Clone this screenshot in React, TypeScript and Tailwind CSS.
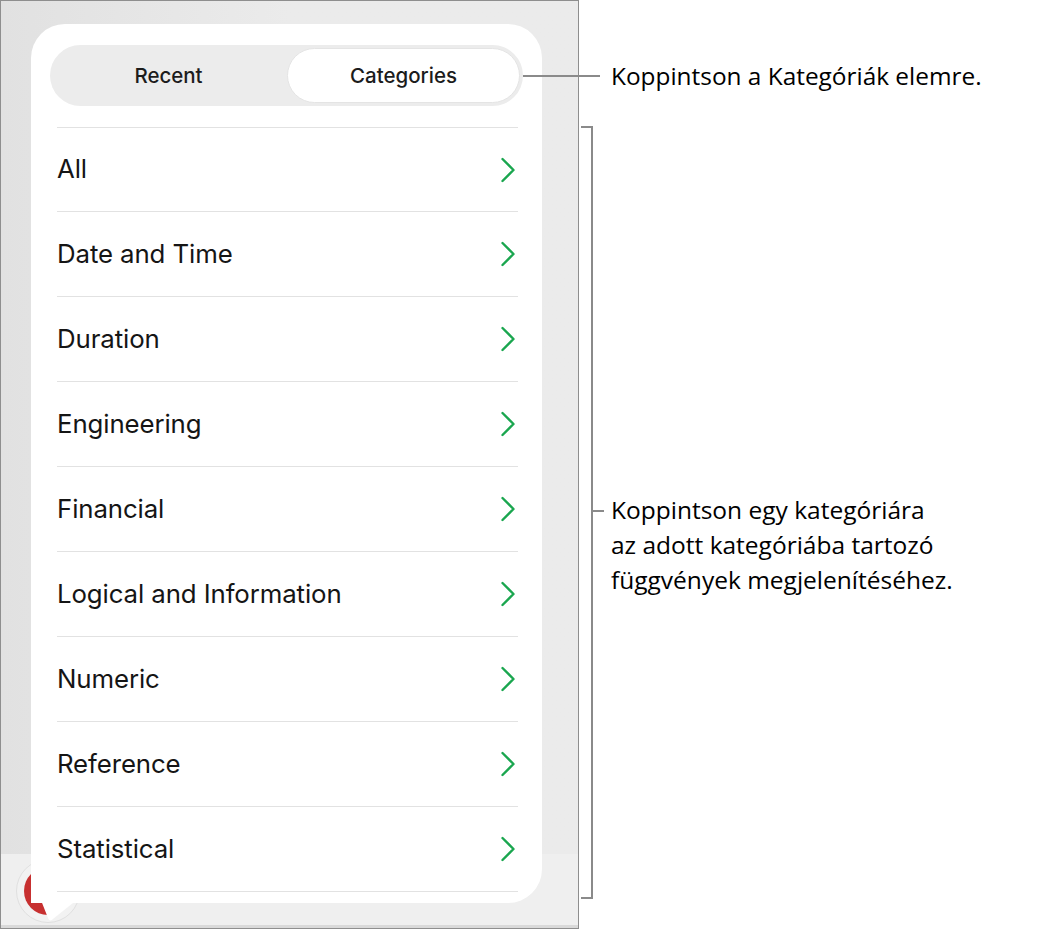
import React from "react";

const items = [
  "All",
  "Date and Time",
  "Duration",
  "Engineering",
  "Financial",
  "Logical and Information",
  "Numeric",
  "Reference",
  "Statistical",
];

function Chevron() {
  return (
    <svg width="16" height="26" viewBox="0 0 16 26" fill="none">
      <path d="M2.5 2 L13.5 13 L2.5 24" stroke="#1aa64f" strokeWidth="2.4" strokeLinecap="round" strokeLinejoin="round" />
    </svg>
  );
}

const noteFont = { fontFamily: "'Open Sans', sans-serif" };

export default function App() {
  return (
    <div className="w-[1039px] h-[932px] bg-white overflow-hidden flex items-start" style={{ fontFamily: "Inter, 'Noto Sans', sans-serif" }}>
      {/* device frame */}
      <div className="relative shrink-0 w-[579px] h-[929px] border border-[#8e8e8e] bg-[#ebebeb] flex flex-col overflow-hidden">
        <div className="flex-1 bg-gradient-to-r from-[#e1e1e1] via-[#ebebeb] to-[#ebebeb]" />
        <div className="relative h-[74px] bg-[#efefef] border-b-[3px] border-[#d9d9d9]">
          {/* red button, mostly hidden under the popover */}
          <div className="absolute left-[15px] top-[5px] w-[64px] h-[64px] rounded-full bg-[#f2f2f2] border border-[#e0e0e0] flex items-center justify-center">
            <div className="w-[48px] h-[48px] rounded-full bg-[#c73030]" />
          </div>
        </div>

        {/* popover */}
        <div className="absolute left-[30px] top-[23px] w-[511px] h-[879px]">
          <svg className="absolute left-0 top-[820px]" width="60" height="80" viewBox="0 0 60 80">
            <path d="M0 0 L0 26 C0 30 1 33 2 36 L17 74 C18 77 20 77 22 75 L42 59 L60 59 L60 0 Z" fill="#ffffff" />
          </svg>
          <div className="relative w-full h-full bg-white rounded-[34px] rounded-bl-none overflow-hidden">
            <div className="ml-[19px] mt-[21px] w-[473px] h-[61px] rounded-full bg-[#ececec] p-[3px] flex">
              <div className="flex-1 flex items-center justify-center pt-[2px] text-[20.5px] font-medium text-[#1c1c1c]">Recent</div>
              <div className="flex-1 ml-[3px] flex items-center justify-center pt-[2px] rounded-full bg-white border border-[#e4e4e4] text-[20.5px] font-medium text-[#1c1c1c]">
                Categories
              </div>
            </div>
            <div className="ml-[26px] mr-[24px] mt-[21px] border-t border-[#e2e2e2]">
              {items.map((t, i) => (
                <div key={t} className={`${i === 0 ? "h-[84px]" : "h-[85px]"} border-b border-[#e2e2e2] flex items-center justify-between pr-[2px]`}>
                  <span className="text-[25.8px] text-[#151515] tracking-[-0.1px]">{t}</span>
                  <Chevron />
                </div>
              ))}
              <div className="h-[85px]" />
            </div>
          </div>
        </div>
      </div>

      {/* annotations */}
      <div className="flex flex-col">
        <div className="mt-[58px] h-[36px] flex items-center">
          <div className="relative z-10 -ml-[56px] w-[77px] h-[2px] bg-[#8a8a8a]" />
          <div className="ml-[11px] text-[24.4px] leading-[36px] text-black whitespace-nowrap" style={noteFont}>
            Koppintson a Kategóriák elemre.
          </div>
        </div>

        <div className="mt-[32px] ml-[2px] flex items-center">
          <div className="w-[12px] h-[773px] border-y-2 border-r-2 border-[#8a8a8a]" />
          <div className="w-[11px] h-[2px] bg-[#8a8a8a] -mt-[4px]" />
          <div className="ml-[7px] mt-[64px] text-[24.5px] leading-[35px] text-black whitespace-nowrap" style={noteFont}>
            <div>Koppintson egy kategóriára</div>
            <div>az adott kategóriába tartozó</div>
            <div>függvények megjelenítéséhez.</div>
          </div>
        </div>
      </div>
    </div>
  );
}
